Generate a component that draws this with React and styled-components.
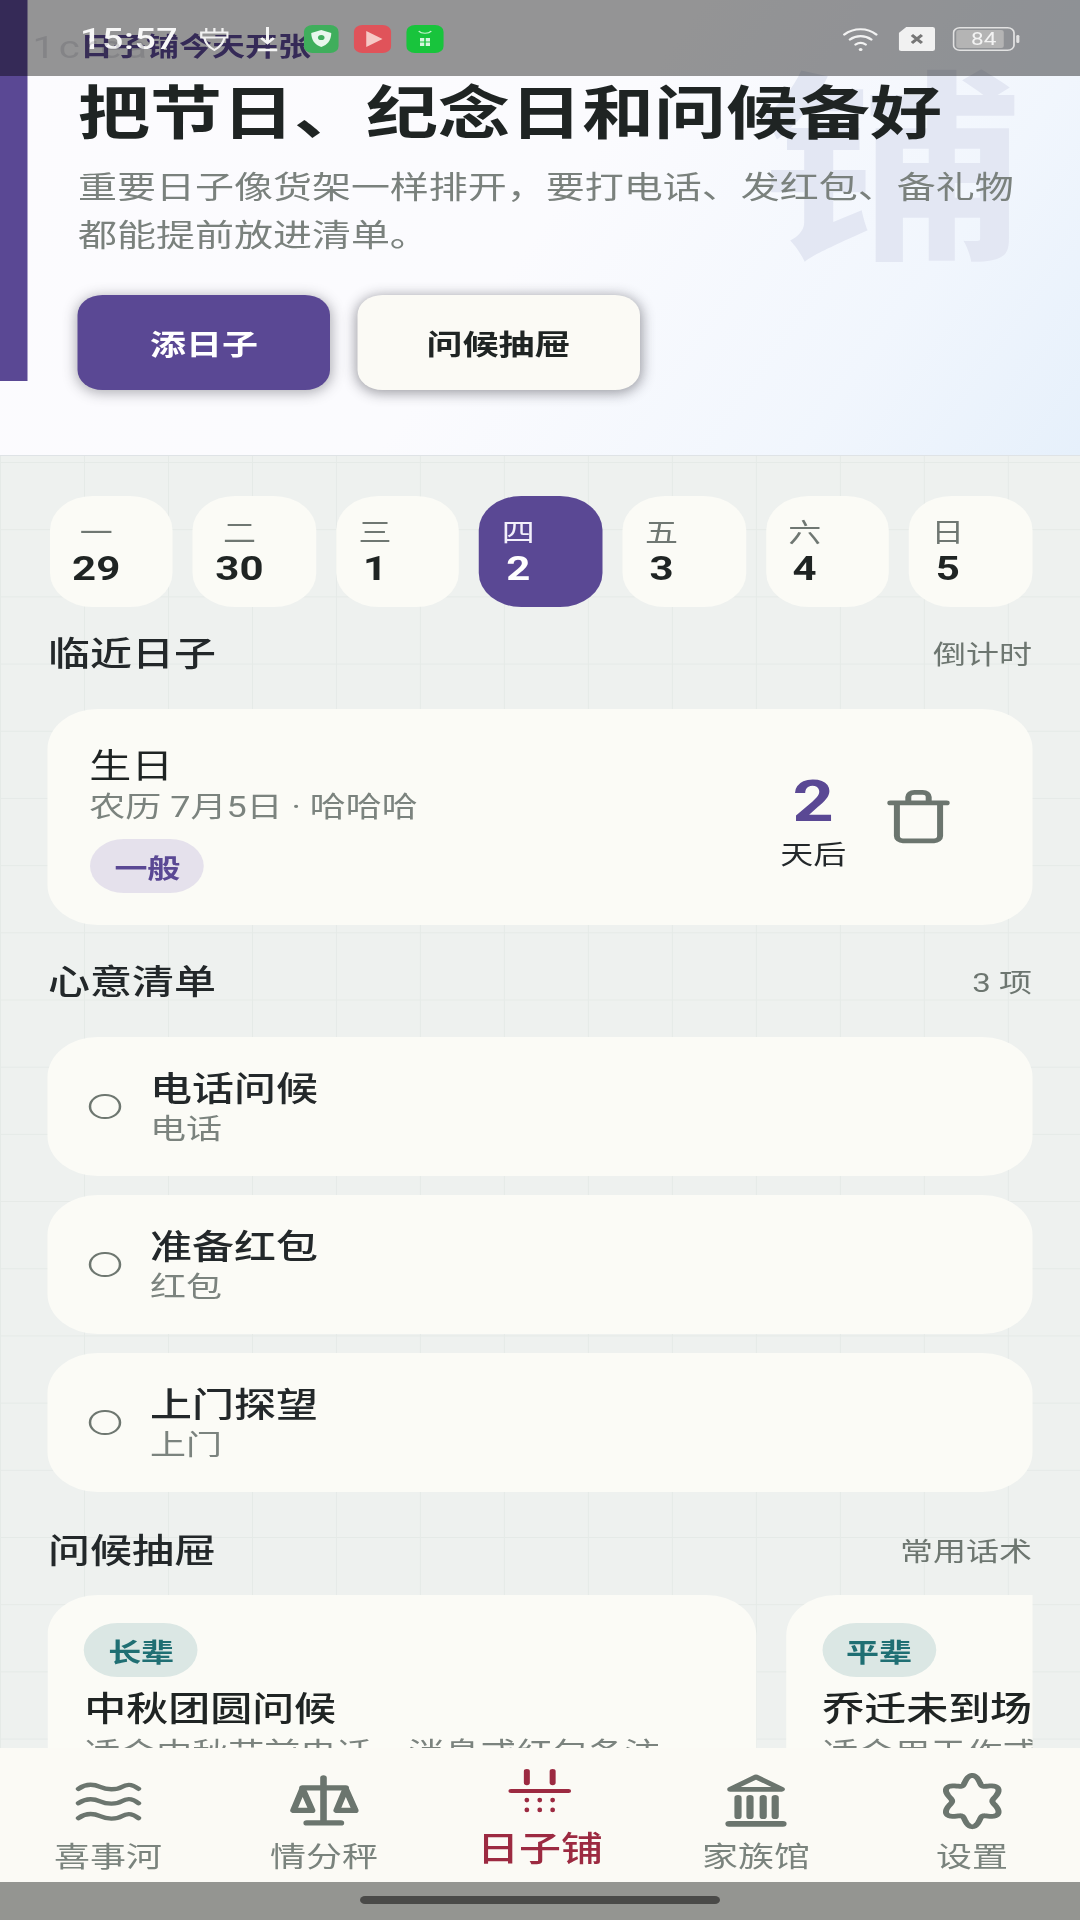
import React from "react";
import styled, { createGlobalStyle } from "styled-components";

// the capture is 360x800dp squeezed into 1080x1920, so the whole stage is
// laid out at 864 wide and stretched 1.25x sideways (1dp = 2.4px here)
const GlobalStyle = createGlobalStyle`
  html, body {
    margin: 0;
    padding: 0;
    background: #949591;
  }
  body {
    font-family: Roboto, "Noto Sans CJK SC", sans-serif;
    overflow: hidden;
  }
`;

const Stage = styled.div`
  position: relative;
  display: flex;
  flex-direction: column;
  width: 864px;
  height: 1920px;
  overflow: hidden;
  transform: scaleX(1.25);
  transform-origin: 0 0;
  background: #949591;
  filter: blur(0.4px);
`;

const Scroller = styled.div`
  flex: 1;
  min-height: 0;
  overflow: hidden;
  background-color: #eef1ef;
`;

const StatusBar = styled.div`
  position: absolute;
  top: 0;
  left: 0;
  right: 0;
  height: 76px;
  display: flex;
  align-items: center;
  justify-content: space-between;
  padding: 0 48px 0 64px;
  box-sizing: border-box;
  background: rgba(0, 0, 0, 0.41);
  color: #f8f8f8;
`;

const GhostText = styled.div`
  position: absolute;
  left: 26px;
  top: 29px;
  font-size: 32px;
  line-height: 36px;
  letter-spacing: 3px;
  color: rgba(70, 70, 78, 0.2);
`;

const StatusGroup = styled.div`
  display: flex;
  align-items: center;
  gap: ${(p) => p.$gap || 0}px;
  margin-top: 1px;
`;

const Clock = styled.span`
  width: 70px;
  font-size: 30px;
  line-height: 34px;
  font-weight: 500;
  margin-right: 26px;
  letter-spacing: 0.5px;
`;

const StatusIcon = styled.svg`
  display: block;
  flex: none;
  margin-right: ${(p) => p.$after || 0}px;
`;

const Hero = styled.header`
  position: relative;
  overflow: hidden;
  box-sizing: border-box;
  height: 456px;
  padding: 30px 0 0 62.4px;
  background: linear-gradient(120deg, #fcfbfe 0%, #fbfbfe 50%, #f1f6fd 80%, #e6f0fb 100%);
  border-bottom: 1px solid #dfe3e6;
`;

const SideMark = styled.div`
  position: absolute;
  left: 0;
  top: 0;
  width: 21.6px;
  height: 381px;
  background: #5a4894;
`;

const Watermark = styled.div`
  position: absolute;
  right: 48px;
  top: 44px;
  font-size: 205px;
  line-height: 260px;
  font-weight: 700;
  color: #e3e7f3;
  transform: scaleX(1.05);
`;

const Eyebrow = styled.div`
  position: relative;
  font-size: 26.4px;
  line-height: 34px;
  font-weight: 700;
  color: #5a4894;
  padding-left: 1.6px;
`;

const HeroTitle = styled.h1`
  position: relative;
  margin: 17px 0 0;
  font-size: 57.6px;
  line-height: 68px;
  font-weight: 700;
  color: #1f2423;
  white-space: nowrap;
`;

const HeroText = styled.p`
  position: relative;
  margin: 15px 0 0;
  width: 770px;
  font-size: 31.2px;
  line-height: 48px;
  color: #7a817d;
`;

const HeroActions = styled.div`
  position: relative;
  display: flex;
  gap: 21.6px;
  margin-top: 35px;
`;

const HeroButton = styled.button`
  height: 95px;
  width: ${(p) => (p.$primary ? "201.6px" : "226.4px")};
  border: 0;
  border-radius: 20px;
  padding: 0;
  font-family: inherit;
  font-size: 28.8px;
  font-weight: 700;
  background: ${(p) => (p.$primary ? "#5a4894" : "#fbfaf5")};
  color: ${(p) => (p.$primary ? "#ffffff" : "#1f2423")};
  box-shadow: 0 2px 11px 1px rgba(50, 50, 60, ${(p) => (p.$primary ? 0.38 : 0.48)});
`;

const Content = styled.main`
  padding: 40px 38.4px 0;
  min-height: 1400px;
  background-image:
    linear-gradient(#e5eae7 1px, transparent 1px),
    linear-gradient(90deg, #e5eae7 1px, transparent 1px);
  background-size: 67.2px 67.2px;
  background-position: 0 6px;
`;

const WeekRow = styled.div`
  display: flex;
  gap: 16px;
  margin-left: 1.3px;
`;

const DayChip = styled.div`
  flex: 1;
  height: 111px;
  box-sizing: border-box;
  padding: 19px 0 0 18px;
  border-radius: 34px;
  background: ${(p) => (p.$active ? "#5a4894" : "#fbfbf6")};
  color: ${(p) => (p.$active ? "#ffffff" : "#1f2423")};
`;

const DayInner = styled.div`
  display: inline-flex;
  flex-direction: column;
  align-items: center;
  min-width: 26px;
`;

const DayName = styled.span`
  font-size: 26.4px;
  line-height: 36px;
  color: ${(p) => (p.$active ? "#f3f0fb" : "#6f7772")};
`;

const DayNumber = styled.span`
  font-size: 33.6px;
  line-height: 36px;
  font-weight: 700;
`;

const SectionHead = styled.div`
  display: flex;
  align-items: center;
  justify-content: space-between;
  height: 36px;
  margin-top: ${(p) => p.$top}px;
  margin-bottom: ${(p) => p.$bottom}px;
`;

const SectionTitle = styled.h2`
  margin: 2px 0 0;
  font-size: 33.6px;
  line-height: 36px;
  font-weight: 500;
  color: #23282a;
`;

const SectionNote = styled.span`
  font-size: 26.4px;
  line-height: 36px;
  color: #6d7670;
  padding-top: 2px;
`;

const EventCard = styled.section`
  display: flex;
  align-items: center;
  height: 216px;
  box-sizing: border-box;
  padding: 0 62.4px 0 33px;
  border-radius: 40px;
  background: #fbfbf6;
  color: #6b756e;
`;

const EventMain = styled.div`
  flex: 1;
  padding-top: 6px;
`;

const EventName = styled.div`
  font-size: 33.6px;
  line-height: 40px;
  color: #1f2423;
`;

const EventMeta = styled.div`
  font-size: 28.8px;
  line-height: 40px;
  color: #7b837e;
`;

const Pill = styled.span`
  display: flex;
  align-items: center;
  justify-content: center;
  width: 91px;
  height: 54px;
  margin-top: 12px;
  margin-left: 1px;
  border-radius: 27px;
  font-size: 26.4px;
  font-weight: 700;
  background: ${(p) => (p.$tone === "teal" ? "#dbe7e4" : "#e5e1ec")};
  color: ${(p) => (p.$tone === "teal" ? "#1f6f73" : "#5a4894")};
`;

const Countdown = styled.div`
  display: flex;
  flex-direction: column;
  align-items: center;
  width: 64px;
  margin: 10px 23px 0 0;
`;

const CountValue = styled.span`
  font-size: 57.6px;
  line-height: 60px;
  font-weight: 700;
  color: #5a4894;
`;

const CountUnit = styled.span`
  margin-top: 5px;
  font-size: 26.4px;
  line-height: 36px;
  color: #23282a;
  white-space: nowrap;
`;

const Checklist = styled.div`
  display: flex;
  flex-direction: column;
  gap: 19px;
`;

const CheckRow = styled.div`
  display: flex;
  align-items: center;
  gap: 23px;
  height: 139px;
  box-sizing: border-box;
  padding-left: 33px;
  border-radius: 40px;
  background: #fbfbf6;
`;

const Radio = styled.span`
  flex: none;
  width: 25.6px;
  height: 25.6px;
  box-sizing: border-box;
  border: 2px solid #6e7770;
  border-radius: 50%;
`;

const CheckText = styled.div`
  padding-top: 4px;
`;

const CheckName = styled.div`
  font-size: 33.6px;
  line-height: 40px;
  font-weight: 500;
  color: #23282a;
`;

const CheckNote = styled.div`
  font-size: 28.8px;
  line-height: 38px;
  color: #7b837e;
`;

const QuoteStrip = styled.div`
  display: flex;
  gap: 24px;
  overflow: hidden;
`;

const QuoteCard = styled.article`
  flex: none;
  width: 566.4px;
  height: 300px;
  box-sizing: border-box;
  padding: 16px 28px 0;
  border-radius: 40px;
  background: #fbfbf6;
`;

const QuoteName = styled.div`
  margin-top: 13px;
  margin-left: 1px;
  font-size: 33.6px;
  line-height: 40px;
  font-weight: 500;
  color: #1f2423;
  white-space: nowrap;
`;

const QuoteText = styled.div`
  margin-top: 6px;
  margin-left: 1px;
  font-size: 28.8px;
  line-height: 34px;
  color: #7b837e;
  white-space: nowrap;
`;

const TabBar = styled.nav`
  flex: none;
  display: grid;
  grid-template-columns: repeat(5, 1fr);
  height: 134px;
  background: #fbfaf5;
`;

const Tab = styled.div`
  display: flex;
  flex-direction: column;
  align-items: center;
  padding-top: ${(p) => (p.$active ? 18 : 25)}px;
  color: ${(p) => (p.$active ? "#9c2a41" : "#6b756e")};
`;

const TabLabel = styled.span`
  margin-top: 9.6px;
  font-size: ${(p) => (p.$active ? 33.6 : 28.8)}px;
  line-height: 34px;
  font-weight: ${(p) => (p.$active ? 500 : 400)};
  color: ${(p) => (p.$active ? "#9c2a41" : "#7a837d")};
`;

const GestureArea = styled.div`
  flex: none;
  display: flex;
  justify-content: center;
  height: 38px;
  padding-top: 14px;
  box-sizing: border-box;
`;

const GestureHandle = styled.div`
  width: 288px;
  height: 8px;
  border-radius: 4px;
  background: #4a4a48;
`;

const IconSvg = styled.svg`
  display: block;
  flex: none;
  fill: none;
  stroke: currentColor;
  stroke-width: 2;
  stroke-linecap: round;
  stroke-linejoin: round;
`;

const Icon = ({ children }) => (
  <IconSvg width="57.6" height="57.6" viewBox="0 0 24 24">
    {children}
  </IconSvg>
);

const gearPath = () => {
  const pts = [];
  for (let i = 0; i < 120; i++) {
    const a = (i / 120) * Math.PI * 2;
    const r = 8.3 + 1.6 * Math.cos(6 * a);
    pts.push(`${(12 + r * Math.sin(a)).toFixed(2)} ${(11.7 - r * 1.08 * Math.cos(a)).toFixed(2)}`);
  }
  return `M${pts.join("L")}Z`;
};

const RiverIcon = () => (
  <Icon>
    <path d="M2 6.6C4.5 4.4 7 4.6 9.2 5.8S14.5 7.2 16.4 5.8 20 4.6 22 6.6" strokeWidth="1.8" />
    <path d="M2 12.6C4.5 10.4 7 10.6 9.2 11.8S14.5 13.2 16.4 11.8 20 10.6 22 12.6" strokeWidth="1.8" />
    <path d="M2 18.8C4.5 16.6 7 16.8 9.2 18S14.5 19.4 16.4 18 20 16.8 22 18.8" strokeWidth="1.8" />
  </Icon>
);

const BalanceIcon = () => (
  <Icon>
    <path d="M12 2V20.8M6.4 20.8H17.8M5 6.2H19.4" strokeWidth="2.2" />
    <path d="M5 6.6L2 15.6H8.2ZM19.4 6.6L16.4 15.6H22.6Z" strokeWidth="2.2" />
  </Icon>
);

const ShopIcon = () => (
  <Icon>
    <path d="M7.7 2.2V7M16.3 2.2V7" strokeWidth="2" />
    <path d="M2.4 10.4H21.6" strokeWidth="1.7" />
    <g fill="currentColor" stroke="none">
      {[7.7, 12, 16.3].map((x) => (
        <React.Fragment key={x}>
          <ellipse cx={x} cy="14.2" rx="0.8" ry="1" />
          <ellipse cx={x} cy="18.3" rx="0.8" ry="1" />
        </React.Fragment>
      ))}
    </g>
  </Icon>
);

const HallIcon = () => (
  <Icon>
    <path d="M12 1.6L20.6 6.8H3.4Z" strokeWidth="2" />
    <path d="M6 10.4V18M10 10.4V18M14.4 10.4V18M18.4 10.4V18" strokeWidth="2.4" />
    <path d="M3 21.2H21" strokeWidth="2.4" />
  </Icon>
);

const GearIcon = () => (
  <Icon>
    <path d={gearPath()} />
  </Icon>
);

const TrashIcon = () => (
  <Icon>
    <path d="M2.6 6.2H21.4M4.8 6.2V20a2 2 0 0 0 2 2H17.2a2 2 0 0 0 2-2V6.2M8.6 6.2V3.8a2 2 0 0 1 2-2h2.8a2 2 0 0 1 2 2V6.2" />
  </Icon>
);

const days = [
  ["一", "29"],
  ["二", "30"],
  ["三", "1"],
  ["四", "2", true],
  ["五", "3"],
  ["六", "4"],
  ["日", "5"],
];

const checks = [
  ["电话问候", "电话"],
  ["准备红包", "红包"],
  ["上门探望", "上门"],
];

const quotes = [
  ["长辈", "中秋团圆问候", "适合中秋节前电话、消息或红包备注"],
  ["平辈", "乔迁未到场", "适合用于作或礼金备注"],
];

const tabs = [
  ["喜事河", RiverIcon],
  ["情分秤", BalanceIcon],
  ["日子铺", ShopIcon, true],
  ["家族馆", HallIcon],
  ["设置", GearIcon],
];

const StatusContent = () => (
  <>
    <StatusGroup>
      <Clock>15:57</Clock>
      <StatusIcon $after={23} width="23" height="24" viewBox="0 0 23 24" fill="none" stroke="#f1f1f1" strokeWidth="1.8">
        <path d="M5 1v4M11.5 1v4M18 1v4M1 5.5h21v5h-21zM3.5 11c1 6 5 10 8 12 3-2 7-6 8-12" />
      </StatusIcon>
      <StatusIcon $after={21} width="16" height="26" viewBox="0 0 16 26" fill="none" stroke="#f4f4f4" strokeWidth="2.4">
        <path d="M8 1v16M3 12l5 5 5-5" />
        <path d="M0 24h16" />
      </StatusIcon>
      <StatusIcon $after={12} width="28" height="28" viewBox="0 0 28 28">
        <rect width="28" height="28" rx="7" fill="#3fae5c" />
        <path d="M14 5l8 3c0 7-3 12-8 14-5-2-8-7-8-14z" fill="#e8f6ec" />
        <circle cx="14" cy="12.5" r="2.6" fill="#3fae5c" />
      </StatusIcon>
      <StatusIcon $after={12} width="30" height="28" viewBox="0 0 30 28">
        <rect width="30" height="28" rx="7" fill="#e0535a" />
        <path d="M10 6l13 8-13 8z" fill="#f6c9c6" />
      </StatusIcon>
      <StatusIcon width="30" height="28" viewBox="0 0 30 28">
        <rect width="30" height="28" rx="7" fill="#18c43c" />
        <path d="M10 6c2 3 8 3 10 0" fill="none" stroke="#c7f2d0" strokeWidth="1.2" />
        <path d="M11 13h3.4v3.4H11zM15.6 13H19v3.4h-3.4zM11 17.6h3.4V21H11zM15.6 17.6H19V21h-3.4z" fill="#d6f6dd" />
      </StatusIcon>
    </StatusGroup>
    <StatusGroup>
      <StatusIcon $after={14} width="31" height="26" viewBox="0 0 31 26" fill="none" stroke="#f2f2f2" strokeWidth="2.2" strokeLinecap="round">
        <path d="M1.5 8.5C9 1.5 20 1.5 27 8.5" />
        <path d="M6 13.5c5-4.5 12-4.5 17 0" />
        <path d="M10.5 18.5c2.5-2 5.5-2 8 0" />
        <circle cx="14.5" cy="23.5" r="1.5" fill="#f2f2f2" stroke="none" />
      </StatusIcon>
      <StatusIcon $after={14} width="29" height="24" viewBox="0 0 29 24">
        <path d="M6 0h21a2 2 0 0 1 2 2v20a2 2 0 0 1-2 2H2a2 2 0 0 1-2-2V6z" fill="#f1f1f1" />
        <path d="M10.5 8l8 8M18.5 8l-8 8" stroke="#777" strokeWidth="2.6" />
      </StatusIcon>
      <StatusIcon width="54" height="24" viewBox="0 0 54 24">
        <rect x="0.8" y="0.8" width="48.4" height="22.4" rx="5" fill="none" stroke="#e2e2e2" strokeWidth="1.4" />
        <rect x="3" y="3" width="38" height="18" rx="2" fill="#b4b4b4" />
        <rect x="51" y="8" width="2.5" height="8" rx="1.2" fill="#e2e2e2" />
        <text x="25" y="18" textAnchor="middle" fontSize="18" fontFamily="Roboto, sans-serif" fill="#f3f3f3">84</text>
      </StatusIcon>
    </StatusGroup>
  </>
);

export default function App() {
  return (
    <>
      <GlobalStyle />
      <Stage>
        <Scroller>
          <Hero>
            <Watermark>铺</Watermark>
            <SideMark />
            <Eyebrow>日子铺今天开张</Eyebrow>
            <HeroTitle>把节日、纪念日和问候备好</HeroTitle>
            <HeroText>重要日子像货架一样排开，要打电话、发红包、备礼物都能提前放进清单。</HeroText>
            <HeroActions>
              <HeroButton $primary>添日子</HeroButton>
              <HeroButton>问候抽屉</HeroButton>
            </HeroActions>
          </Hero>
          <Content>
            <WeekRow>
              {days.map(([name, num, active]) => (
                <DayChip key={name} $active={active}>
                  <DayInner>
                    <DayName $active={active}>{name}</DayName>
                    <DayNumber>{num}</DayNumber>
                  </DayInner>
                </DayChip>
              ))}
            </WeekRow>

            <SectionHead $top={29} $bottom={37}>
              <SectionTitle>临近日子</SectionTitle>
              <SectionNote>倒计时</SectionNote>
            </SectionHead>
            <EventCard>
              <EventMain>
                <EventName>生日</EventName>
                <EventMeta>农历 7月5日 · 哈哈哈</EventMeta>
                <Pill>一般</Pill>
              </EventMain>
              <Countdown>
                <CountValue>2</CountValue>
                <CountUnit>天后</CountUnit>
              </Countdown>
              <TrashIcon />
            </EventCard>

            <SectionHead $top={39} $bottom={37}>
              <SectionTitle>心意清单</SectionTitle>
              <SectionNote>3 项</SectionNote>
            </SectionHead>
            <Checklist>
              {checks.map(([name, note]) => (
                <CheckRow key={name}>
                  <Radio />
                  <CheckText>
                    <CheckName>{name}</CheckName>
                    <CheckNote>{note}</CheckNote>
                  </CheckText>
                </CheckRow>
              ))}
            </Checklist>

            <SectionHead $top={41} $bottom={26}>
              <SectionTitle>问候抽屉</SectionTitle>
              <SectionNote>常用话术</SectionNote>
            </SectionHead>
            <QuoteStrip>
              {quotes.map(([tag, name, text]) => (
                <QuoteCard key={name}>
                  <Pill $tone="teal">{tag}</Pill>
                  <QuoteName>{name}</QuoteName>
                  <QuoteText>{text}</QuoteText>
                </QuoteCard>
              ))}
            </QuoteStrip>
          </Content>
        </Scroller>
        <TabBar>
          {tabs.map(([label, TabIcon, active]) => (
            <Tab key={label} $active={active}>
              <TabIcon />
              <TabLabel $active={active}>{label}</TabLabel>
            </Tab>
          ))}
        </TabBar>
        <GestureArea>
          <GestureHandle />
        </GestureArea>
        <StatusBar>
          <StatusContent />
        </StatusBar>
        <GhostText>1crea</GhostText>
      </Stage>
    </>
  );
}
